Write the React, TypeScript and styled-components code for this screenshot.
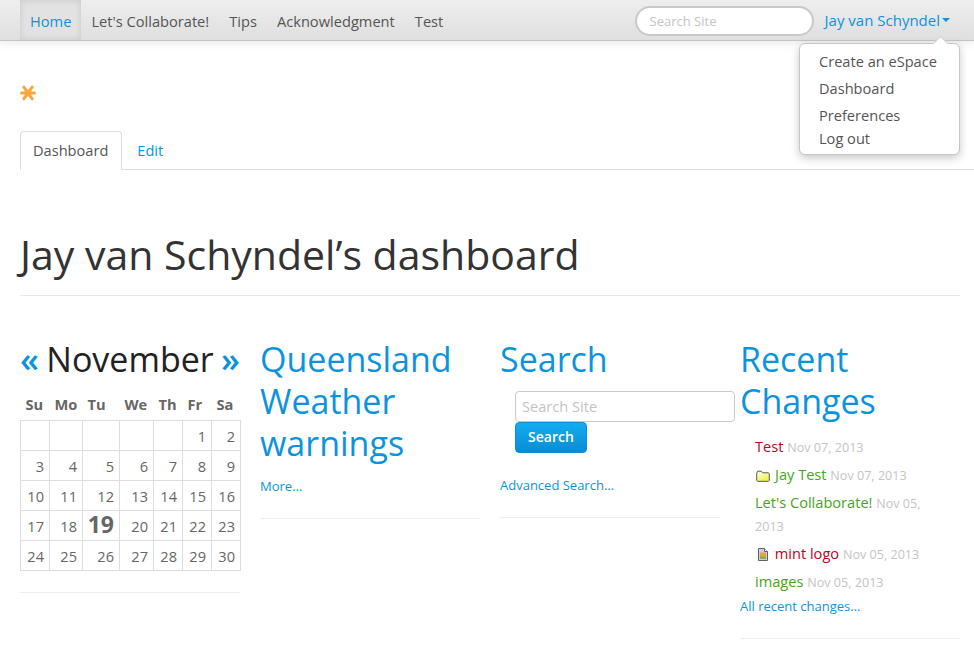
import React from "react";
import styled, { createGlobalStyle } from "styled-components";

const Global = createGlobalStyle`
  html, body {
    margin: 0;
    padding: 0;
    background: #fff;
    font-family: "Open Sans", "Liberation Sans", sans-serif;
    font-size: 14.6px;
    color: #555;
  }
  * { box-sizing: border-box; }
`;

const Page = styled.div`
  width: 974px;
  height: 653px;
  overflow: hidden;
  position: relative;
`;

const NavBar = styled.div`
  height: 41px;
  display: flex;
  align-items: center;
  padding: 0 24px 0 20px;
  background: linear-gradient(#eeeeee, #dfdfdf);
  border-bottom: 1px solid #c4c4c4;
  box-shadow: 0 1px 10px rgba(0, 0, 0, 0.1);
`;

const NavItem = styled.a<{ $active?: boolean }>`
  height: 40px;
  line-height: 43px;
  padding: 0 10px;
  font-size: 14.65px;
  color: ${(p) => (p.$active ? "#0c93de" : "#555")};
  background: ${(p) => (p.$active ? "#e2e2e2" : "transparent")};
  box-shadow: ${(p) => (p.$active ? "inset 0 0 6px rgba(0,0,0,0.12)" : "none")};
`;

const NavSearch = styled.input`
  width: 179px;
  height: 30px;
  margin: 2px 0 0 auto;
  padding: 0 13px;
  border: 2px solid #c8c8c8;
  border-radius: 15px;
  background: #fff;
  font-family: inherit;
  font-size: 13px;
  outline: none;
  &::placeholder {
    color: #c4c4c4;
    opacity: 1;
  }
`;

const UserLink = styled.a`
  margin-left: 11px;
  display: flex;
  align-items: center;
  font-size: 15px;
  color: #0c93de;
  line-height: 43px;
`;

const Caret = styled.span`
  margin-left: 2px;
  border-left: 4px solid transparent;
  border-right: 4px solid transparent;
  border-top: 4px solid #0c93de;
`;

const Dropdown = styled.ul`
  position: absolute;
  top: 43px;
  left: 799px;
  width: 161px;
  height: 112px;
  margin: 0;
  padding: 7px 0 0;
  list-style: none;
  background: #fff;
  border: 1px solid #c6c6c6;
  border-radius: 6px;
  box-shadow: 0 3px 8px rgba(0, 0, 0, 0.22);
  &::before {
    content: "";
    position: absolute;
    top: -6px;
    right: 13px;
    width: 10px;
    height: 10px;
    background: #fff;
    border-left: 1px solid #d0d0d0;
    border-top: 1px solid #d0d0d0;
    transform: rotate(45deg);
  }
`;

const DropItem = styled.li<{ $h: number }>`
  height: ${(p) => p.$h}px;
  line-height: 20px;
  padding-left: 19px;
  color: #555;
`;

const Container = styled.div`
  padding: 0 14px 0 20px;
`;

const Logo = styled.svg`
  display: block;
  margin-top: 44px;
  width: 16px;
  height: 16px;
`;

const Tabs = styled.div`
  display: flex;
  margin: 30px -14px 0 0;
  height: 39px;
  border-bottom: 1px solid #ddd;
`;

const Tab = styled.a<{ $active?: boolean }>`
  height: 39px;
  line-height: 36px;
  padding: 0 13px 0 ${(p) => (p.$active ? 12 : 13)}px;
  margin-right: 1px;
  color: ${(p) => (p.$active ? "#555" : "#0c93de")};
  background: ${(p) => (p.$active ? "#fff" : "transparent")};
  border: 1px solid ${(p) => (p.$active ? "#ddd" : "transparent")};
  border-bottom: 0;
  border-radius: 4px 4px 0 0;
`;

const Title = styled.h1`
  margin: 58px 0 0;
  height: 68px;
  font-size: 41px;
  font-weight: 400;
  line-height: 52px;
  color: #333;
  border-bottom: 1px solid #e8e8e8;
`;

const Rule = styled.div<{ $gap: number }>`
  height: 1px;
  margin-top: ${(p) => p.$gap}px;
  background: #eeeeee;
`;

const Columns = styled.div`
  display: grid;
  grid-template-columns: repeat(4, 220px);
  column-gap: 20px;
  margin-top: 42px;
`;

const Heading = styled.h2`
  margin: 0;
  font-size: 34px;
  font-weight: 400;
  line-height: 42px;
  color: #0c93de;
`;

const MonthRow = styled.div`
  display: flex;
  justify-content: space-between;
  font-size: 34px;
  line-height: 42px;
  color: #222;
  span {
    font-weight: 600;
    color: #0c93de;
  }
`;

const Calendar = styled.table`
  width: 221px;
  margin-top: 14px;
  border-collapse: collapse;
  table-layout: fixed;
  th {
    height: 23px;
    padding: 0 0 6px 5px;
    text-align: left;
    font-weight: 700;
    font-size: 14.6px;
    color: #666;
  }
  td {
    height: 30px;
    padding: 0 5px 0 0;
    text-align: right;
    border: 1px solid #dddddd;
    font-size: 14.6px;
    color: #666;
  }
  th:nth-child(1) { width: 29px; }
  th:nth-child(2) { width: 33px; }
  th:nth-child(3) { width: 37px; }
  th:nth-child(4) { width: 34px; }
  th:nth-child(5) { width: 29px; }
  th:nth-child(6) { width: 29px; }
  th:nth-child(7) { width: 29px; }
`;

const Today = styled.strong`
  font-size: 23px;
  font-weight: 700;
  line-height: 20px;
`;

const SmallLink = styled.a<{ $gap: number }>`
  display: block;
  margin-top: ${(p) => p.$gap}px;
  font-size: 13px;
  color: #0c93de;
`;

const SearchForm = styled.div`
  display: flex;
  flex-direction: column;
  align-items: flex-start;
  margin: 11px 0 0 15px;
`;

const SearchInput = styled.input`
  width: 220px;
  height: 31px;
  padding: 0 6px 2px;
  border: 1px solid #c9c9c9;
  border-radius: 4px;
  font-family: inherit;
  font-size: 14.6px;
  outline: none;
  &::placeholder {
    color: #c4c4c4;
    opacity: 1;
  }
`;

const SearchButton = styled.button`
  width: 72px;
  height: 31px;
  padding: 0 0 2px;
  border: 1px solid #0b8ed4;
  border-radius: 4px;
  background: linear-gradient(#12adf0, #0a8cd6);
  color: #fff;
  font-family: inherit;
  font-size: 14px;
  font-weight: 600;
`;

const Changes = styled.ul`
  margin: 13px 0 0;
  padding: 0 15px;
  list-style: none;
  line-height: 22.5px;
`;

const Change = styled.li`
  margin-bottom: 5.5px;
  font-size: 14.6px;
`;

const ChangeName = styled.span<{ $color: string }>`
  color: ${(p) => p.$color};
`;

const ChangeDate = styled.span`
  font-size: 12.6px;
  line-height: 16px;
  color: #c4c4c4;
`;

const FolderSvg = styled.svg`
  vertical-align: -2px;
  margin: 0 5px 0 1px;
`;

const PageSvg = styled.svg`
  vertical-align: -2px;
  margin: 0 3px 0 3px;
`;

const weeks = [
  ["", "", "", "", "", "1", "2"],
  ["3", "4", "5", "6", "7", "8", "9"],
  ["10", "11", "12", "13", "14", "15", "16"],
  ["17", "18", "19", "20", "21", "22", "23"],
  ["24", "25", "26", "27", "28", "29", "30"],
];

const FolderIcon = () => (
  <FolderSvg width="14" height="12" viewBox="0 0 14 12">
    <defs>
      <linearGradient id="folderFill" x1="0" y1="0" x2="0.4" y2="1">
        <stop offset="0" stopColor="#ffffff" />
        <stop offset="1" stopColor="#f6f04c" />
      </linearGradient>
    </defs>
    <path
      d="M.7 3.5 1.6 1.2h3.8l1.2 1.6h5.9l.8 1V10.4l-.8.9H1.6l-.9-.9Z"
      fill="url(#folderFill)"
      stroke="#5a5a4a"
      strokeWidth="1"
    />
  </FolderSvg>
);

const PageIcon = () => (
  <PageSvg width="10" height="13" viewBox="0 0 10 13">
    <path d="M.5.5h6l3 3v9H.5Z" fill="#c8d2e0" stroke="#5a6270" strokeWidth="1" />
    <path d="M6.5.5v3h3" fill="#fff" stroke="#5a6270" strokeWidth="1" />
    <rect x="2" y="4.5" width="6" height="6.5" fill="#eda23a" />
    <rect x="2" y="8.5" width="6" height="2.5" fill="#8ab04a" />
  </PageSvg>
);

export default function App() {
  return (
    <Page>
      <Global />
      <NavBar>
        <NavItem $active>Home</NavItem>
        <NavItem>Let's Collaborate!</NavItem>
        <NavItem>Tips</NavItem>
        <NavItem>Acknowledgment</NavItem>
        <NavItem>Test</NavItem>
        <NavSearch placeholder="Search Site" />
        <UserLink>
          Jay van Schyndel
          <Caret />
        </UserLink>
      </NavBar>
      <Dropdown>
        <DropItem $h={27}>Create an eSpace</DropItem>
        <DropItem $h={27}>Dashboard</DropItem>
        <DropItem $h={23}>Preferences</DropItem>
        <DropItem $h={20}>Log out</DropItem>
      </Dropdown>
      <Container>
        <Logo viewBox="0 0 16 16">
          <g stroke="#f5a63c" strokeWidth="3" strokeLinecap="round">
            <path d="M1.5 8h13" />
            <path d="M3.8 2.2 12.2 13.8" />
            <path d="M12.2 2.2 3.8 13.8" />
          </g>
          <circle cx="8" cy="8" r="3.6" fill="#f7a83a" />
        </Logo>
        <Tabs>
          <Tab $active>Dashboard</Tab>
          <Tab>Edit</Tab>
        </Tabs>
        <Title>Jay van Schyndel’s dashboard</Title>
        <Columns>
          <div>
            <MonthRow>
              <span>«</span> November <span>»</span>
            </MonthRow>
            <Calendar>
              <thead>
                <tr>
                  {["Su", "Mo", "Tu", "We", "Th", "Fr", "Sa"].map((d) => (
                    <th key={d}>{d}</th>
                  ))}
                </tr>
              </thead>
              <tbody>
                {weeks.map((week, i) => (
                  <tr key={i}>
                    {week.map((day, j) => (
                      <td key={j}>{day === "19" ? <Today>{day}</Today> : day}</td>
                    ))}
                  </tr>
                ))}
              </tbody>
            </Calendar>
            <Rule $gap={21} />
          </div>
          <div>
            <Heading>Queensland Weather warnings</Heading>
            <SmallLink $gap={13}>More…</SmallLink>
            <Rule $gap={23} />
          </div>
          <div>
            <Heading>Search</Heading>
            <SearchForm>
              <SearchInput placeholder="Search Site" />
              <SearchButton>Search</SearchButton>
            </SearchForm>
            <SmallLink $gap={23}>Advanced Search…</SmallLink>
            <Rule $gap={23} />
          </div>
          <div>
            <Heading>Recent Changes</Heading>
            <Changes>
              <Change>
                <ChangeName $color="#c4001a">Test</ChangeName> <ChangeDate>Nov 07, 2013</ChangeDate>
              </Change>
              <Change>
                <FolderIcon />
                <ChangeName $color="#45a51c">Jay Test</ChangeName> <ChangeDate>Nov 07, 2013</ChangeDate>
              </Change>
              <Change>
                <ChangeName $color="#45a51c">Let's Collaborate!</ChangeName> <ChangeDate>Nov 05, 2013</ChangeDate>
              </Change>
              <Change>
                <PageIcon />
                <ChangeName $color="#c4001a"> mint logo</ChangeName> <ChangeDate>Nov 05, 2013</ChangeDate>
              </Change>
              <Change>
                <ChangeName $color="#45a51c">images</ChangeName> <ChangeDate>Nov 05, 2013</ChangeDate>
              </Change>
            </Changes>
            <SmallLink $gap={-1}>All recent changes…</SmallLink>
            <Rule $gap={23} />
          </div>
        </Columns>
      </Container>
    </Page>
  );
}
